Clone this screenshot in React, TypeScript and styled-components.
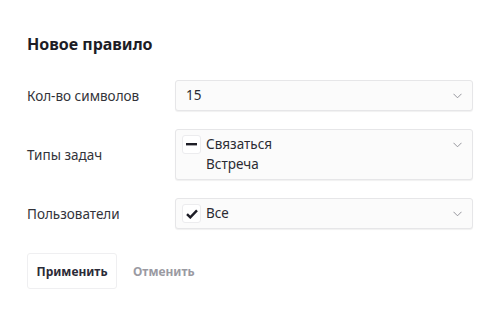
import styled, { createGlobalStyle } from "styled-components";

const GlobalStyle = createGlobalStyle`
  html, body {
    margin: 0;
    padding: 0;
    background: #ffffff;
    font-family: "Noto Sans", "Open Sans", sans-serif;
    color: #2b2b33;
  }
`;

const Page = styled.div`
  width: 496px;
  height: 310px;
  box-sizing: border-box;
  padding: 33px 23px 0 27px;
`;

const Title = styled.h2`
  margin: 0 0 25px;
  font-size: 16px;
  line-height: 22px;
  font-weight: 700;
  color: #1d1d26;
`;

const Form = styled.div`
  display: grid;
  grid-template-columns: 148px 298px;
  row-gap: 18px;
  align-items: center;
`;

const Label = styled.div`
  font-size: 13.5px;
  color: #33333a;
`;

const Select = styled.div<{ $checks?: boolean }>`
  position: relative;
  box-sizing: border-box;
  min-height: 31px;
  padding: 5px 30px 5px ${({ $checks }) => ($checks ? "6px" : "10px")};
  background: #fbfbfb;
  border: 1px solid #e6e6e8;
  border-radius: 3px;
  box-shadow: 0 1px 1px rgba(0, 0, 0, 0.06);
  display: flex;
  flex-direction: column;
  gap: 1px;
`;

const Option = styled.div`
  display: flex;
  align-items: center;
  gap: 5px;
  font-size: 13.5px;
  line-height: 19px;
  color: #2b2b33;
`;

const Indent = styled.div`
  padding-left: 24px;
  font-size: 13.5px;
  line-height: 19px;
  color: #2b2b33;
`;

const Box = styled.span`
  width: 19px;
  height: 19px;
  box-sizing: border-box;
  border: 1px solid #ececee;
  border-radius: 3px;
  background: #ffffff;
  display: inline-flex;
  align-items: center;
  justify-content: center;
`;

const Chevron = styled.svg`
  position: absolute;
  right: 10px;
  top: 12px;
`;

const Actions = styled.div`
  display: flex;
  align-items: center;
  gap: 16px;
  margin-top: 24px;
`;

const ApplyButton = styled.button`
  height: 36px;
  width: 90px;
  padding: 0;
  background: #ffffff;
  border: 1px solid #efeff1;
  border-radius: 3px;
  font-family: inherit;
  font-size: 12px;
  font-weight: 700;
  color: #2b2b38;
`;

const CancelButton = styled.button`
  padding: 0;
  background: none;
  border: none;
  font-family: inherit;
  font-size: 12px;
  font-weight: 700;
  color: #9a9aa2;
`;

const ChevronIcon = () => (
  <Chevron width="9" height="6" viewBox="0 0 9 6">
    <path d="M0.5 0.8 L4.5 4.8 L8.5 0.8" fill="none" stroke="#8a8a92" strokeWidth="0.9" />
  </Chevron>
);

const App = () => (
  <Page>
    <GlobalStyle />
    <Title>Новое правило</Title>
    <Form>
      <Label>Кол-во символов</Label>
      <Select>
        <Option>15</Option>
        <ChevronIcon />
      </Select>

      <Label>Типы задач</Label>
      <Select $checks>
        <Option>
          <Box>
            <svg width="11" height="3" viewBox="0 0 11 3">
              <rect x="0" y="0" width="11" height="2.4" fill="#1d1d26" />
            </svg>
          </Box>
          Связаться
        </Option>
        <Indent>Встреча</Indent>
        <ChevronIcon />
      </Select>

      <Label>Пользователи</Label>
      <Select $checks>
        <Option>
          <Box>
            <svg width="12" height="10" viewBox="0 0 12 10">
              <path d="M1 5.2 L4.3 8.4 L11 1.4" fill="none" stroke="#1d1d26" strokeWidth="2.4" />
            </svg>
          </Box>
          Все
        </Option>
        <ChevronIcon />
      </Select>
    </Form>
    <Actions>
      <ApplyButton>Применить</ApplyButton>
      <CancelButton>Отменить</CancelButton>
    </Actions>
  </Page>
);

export default App;
